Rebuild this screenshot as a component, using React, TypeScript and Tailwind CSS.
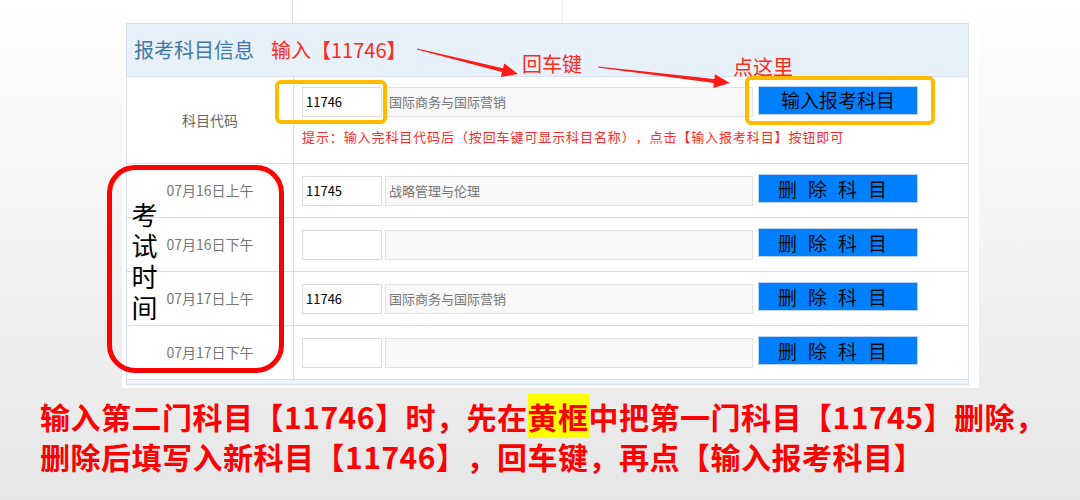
import React from 'react';

const rows = [
  { date: '07月16日上午', code: '11745', name: '战略管理与伦理' },
  { date: '07月16日下午', code: '', name: '' },
  { date: '07月17日上午', code: '11746', name: '国际商务与国际营销' },
  { date: '07月17日下午', code: '', name: '' },
];

const DeleteButton: React.FC = () => (
  <div className="w-[160px] h-[29px] bg-[#0080ff] border border-[#b8d4f0] flex items-end justify-start pl-[19px] gap-[11px] pb-[1px] text-[19px] leading-[24px] text-[#0a0a0a]">
    <span>删</span>
    <span>除</span>
    <span>科</span>
    <span>目</span>
  </div>
);

export default function App() {
  return (
    <div
      className="relative w-[1080px] h-[500px] overflow-hidden bg-gradient-to-b from-white to-[#e6e6e6] [text-spacing-trim:space-all]"
      style={{ fontFamily: '"Noto Sans CJK SC", "Noto Sans", sans-serif' }}
    >
      <div className="ml-[122px] w-[857px] h-[388px] bg-white pl-[4px]">
        {/* leftover of the table above */}
        <div className="w-[843px] h-[23px] flex">
          <div className="w-[167px] border-r border-[#d4e0f2]" />
          <div className="w-[270px] border-r border-[#e6edf7]" />
        </div>

        <div className="w-[843px] border border-[#d4e0f2]">
          {/* header */}
          <div className="h-[53px] bg-[#e8f1f9] border-b border-[#d4e0f2] flex items-center pl-[7px] gap-[17px] text-[20px]">
            <span className="text-[#4278a8]">报考科目信息</span>
            <span className="text-[#ff2a1a]">输入【11746】</span>
          </div>

          {/* 科目代码 row */}
          <div className="h-[87px] flex border-b border-[#d4e0f2]">
            <div className="w-[167px] shrink-0 border-r border-[#d4e0f2] flex items-center justify-center text-[14px] text-[#666]">
              科目代码
            </div>
            <div className="pl-[8px] pt-[10px] flex flex-col">
              <div className="flex items-center">
                <div className="w-[80px] h-[30px] border border-[#dcdcdc] bg-white flex items-center pl-[3px] text-[13px] text-black">
                  11746
                </div>
                <div className="ml-[3px] w-[368px] h-[30px] border border-[#e2e2e2] bg-[#f8f8f8] flex items-center pl-[3px] text-[13px] text-[#777]">
                  国际商务与国际营销
                </div>
                <div className="ml-[5px] w-[160px] h-[29px] bg-[#0080ff] border border-[#b8d4f0] flex items-center justify-center text-[19px] text-[#0a0a0a] -mt-[3px]">
                  输入报考科目
                </div>
              </div>
              <div className="mt-[10px] text-[13px] tracking-[0.9px] text-[#ff2a2a]">
                提示：输入完科目代码后（按回车键可显示科目名称），点击【输入报考科目】按钮即可
              </div>
            </div>
          </div>

          {/* exam rows */}
          {rows.map((r, i) => (
            <div key={i} className="h-[54px] flex border-b border-[#d4e0f2]">
              <div className="w-[167px] shrink-0 border-r border-[#d4e0f2] flex items-center justify-center text-[14px] text-[#777]">
                {r.date}
              </div>
              <div className="pl-[8px] flex items-center">
                <div className="w-[80px] h-[30px] border border-[#dcdcdc] bg-white flex items-center pl-[3px] text-[13px] text-black">
                  {r.code}
                </div>
                <div className="ml-[3px] w-[368px] h-[30px] border border-[#e2e2e2] bg-[#f8f8f8] flex items-center pl-[3px] text-[13px] text-[#777]">
                  {r.name}
                </div>
                <div className="ml-[5px] -mt-[4px]">
                  <DeleteButton />
                </div>
              </div>
            </div>
          ))}
          <div className="h-[4px] bg-[#eef3fa]" />
        </div>
      </div>

      {/* caption */}
      <div className="pl-[40px] pt-[8px] text-[30px] leading-[40px] font-bold text-[#ff0000] tracking-[0.5px]">
        <div>
          输入第二门科目【11746】时，先在<span className="bg-[#ffff00]">黄框</span>中把第一门科目【11745】删除，
        </div>
        <div>删除后填写入新科目【11746】，回车键，再点【输入报考科目】</div>
      </div>

      {/* annotations */}
      <div className="absolute left-[275px] top-[80px] w-[112px] h-[44px] border-4 border-[#ffbb00] rounded-[6px]" />
      <div className="absolute left-[745px] top-[76px] w-[190px] h-[49px] border-4 border-[#ffbb00] rounded-[6px]" />
      <div className="absolute left-[107px] top-[165px] w-[177px] h-[208px] border-[5px] border-[#ff0000] rounded-[28px]" />
      <div className="absolute left-[131px] top-[202px] text-[26px] leading-[27px] tracking-[5px] text-black [writing-mode:vertical-rl]">
        考试时间
      </div>
      <div className="absolute left-[522px] top-[49px] text-[20px] text-[#ff2a1a]">回车键</div>
      <div className="absolute left-[733px] top-[52px] text-[20px] text-[#ff2a1a]">点这里</div>
      <svg className="absolute left-0 top-0 pointer-events-none" width="1080" height="500" viewBox="0 0 1080 500">
        <polygon
          fill="#ff1a1a"
          points="417.1,48.5 503,68.3 504.2,63.4 518,74 500.8,77 502,72.1 416.9,49.5"
        />
        <polygon
          fill="#ff1a1a"
          points="598.06,66.5 714.34,79.12 714.94,74.2 730,83 713.26,88 713.86,83.08 597.94,67.5"
        />
      </svg>
    </div>
  );
}
